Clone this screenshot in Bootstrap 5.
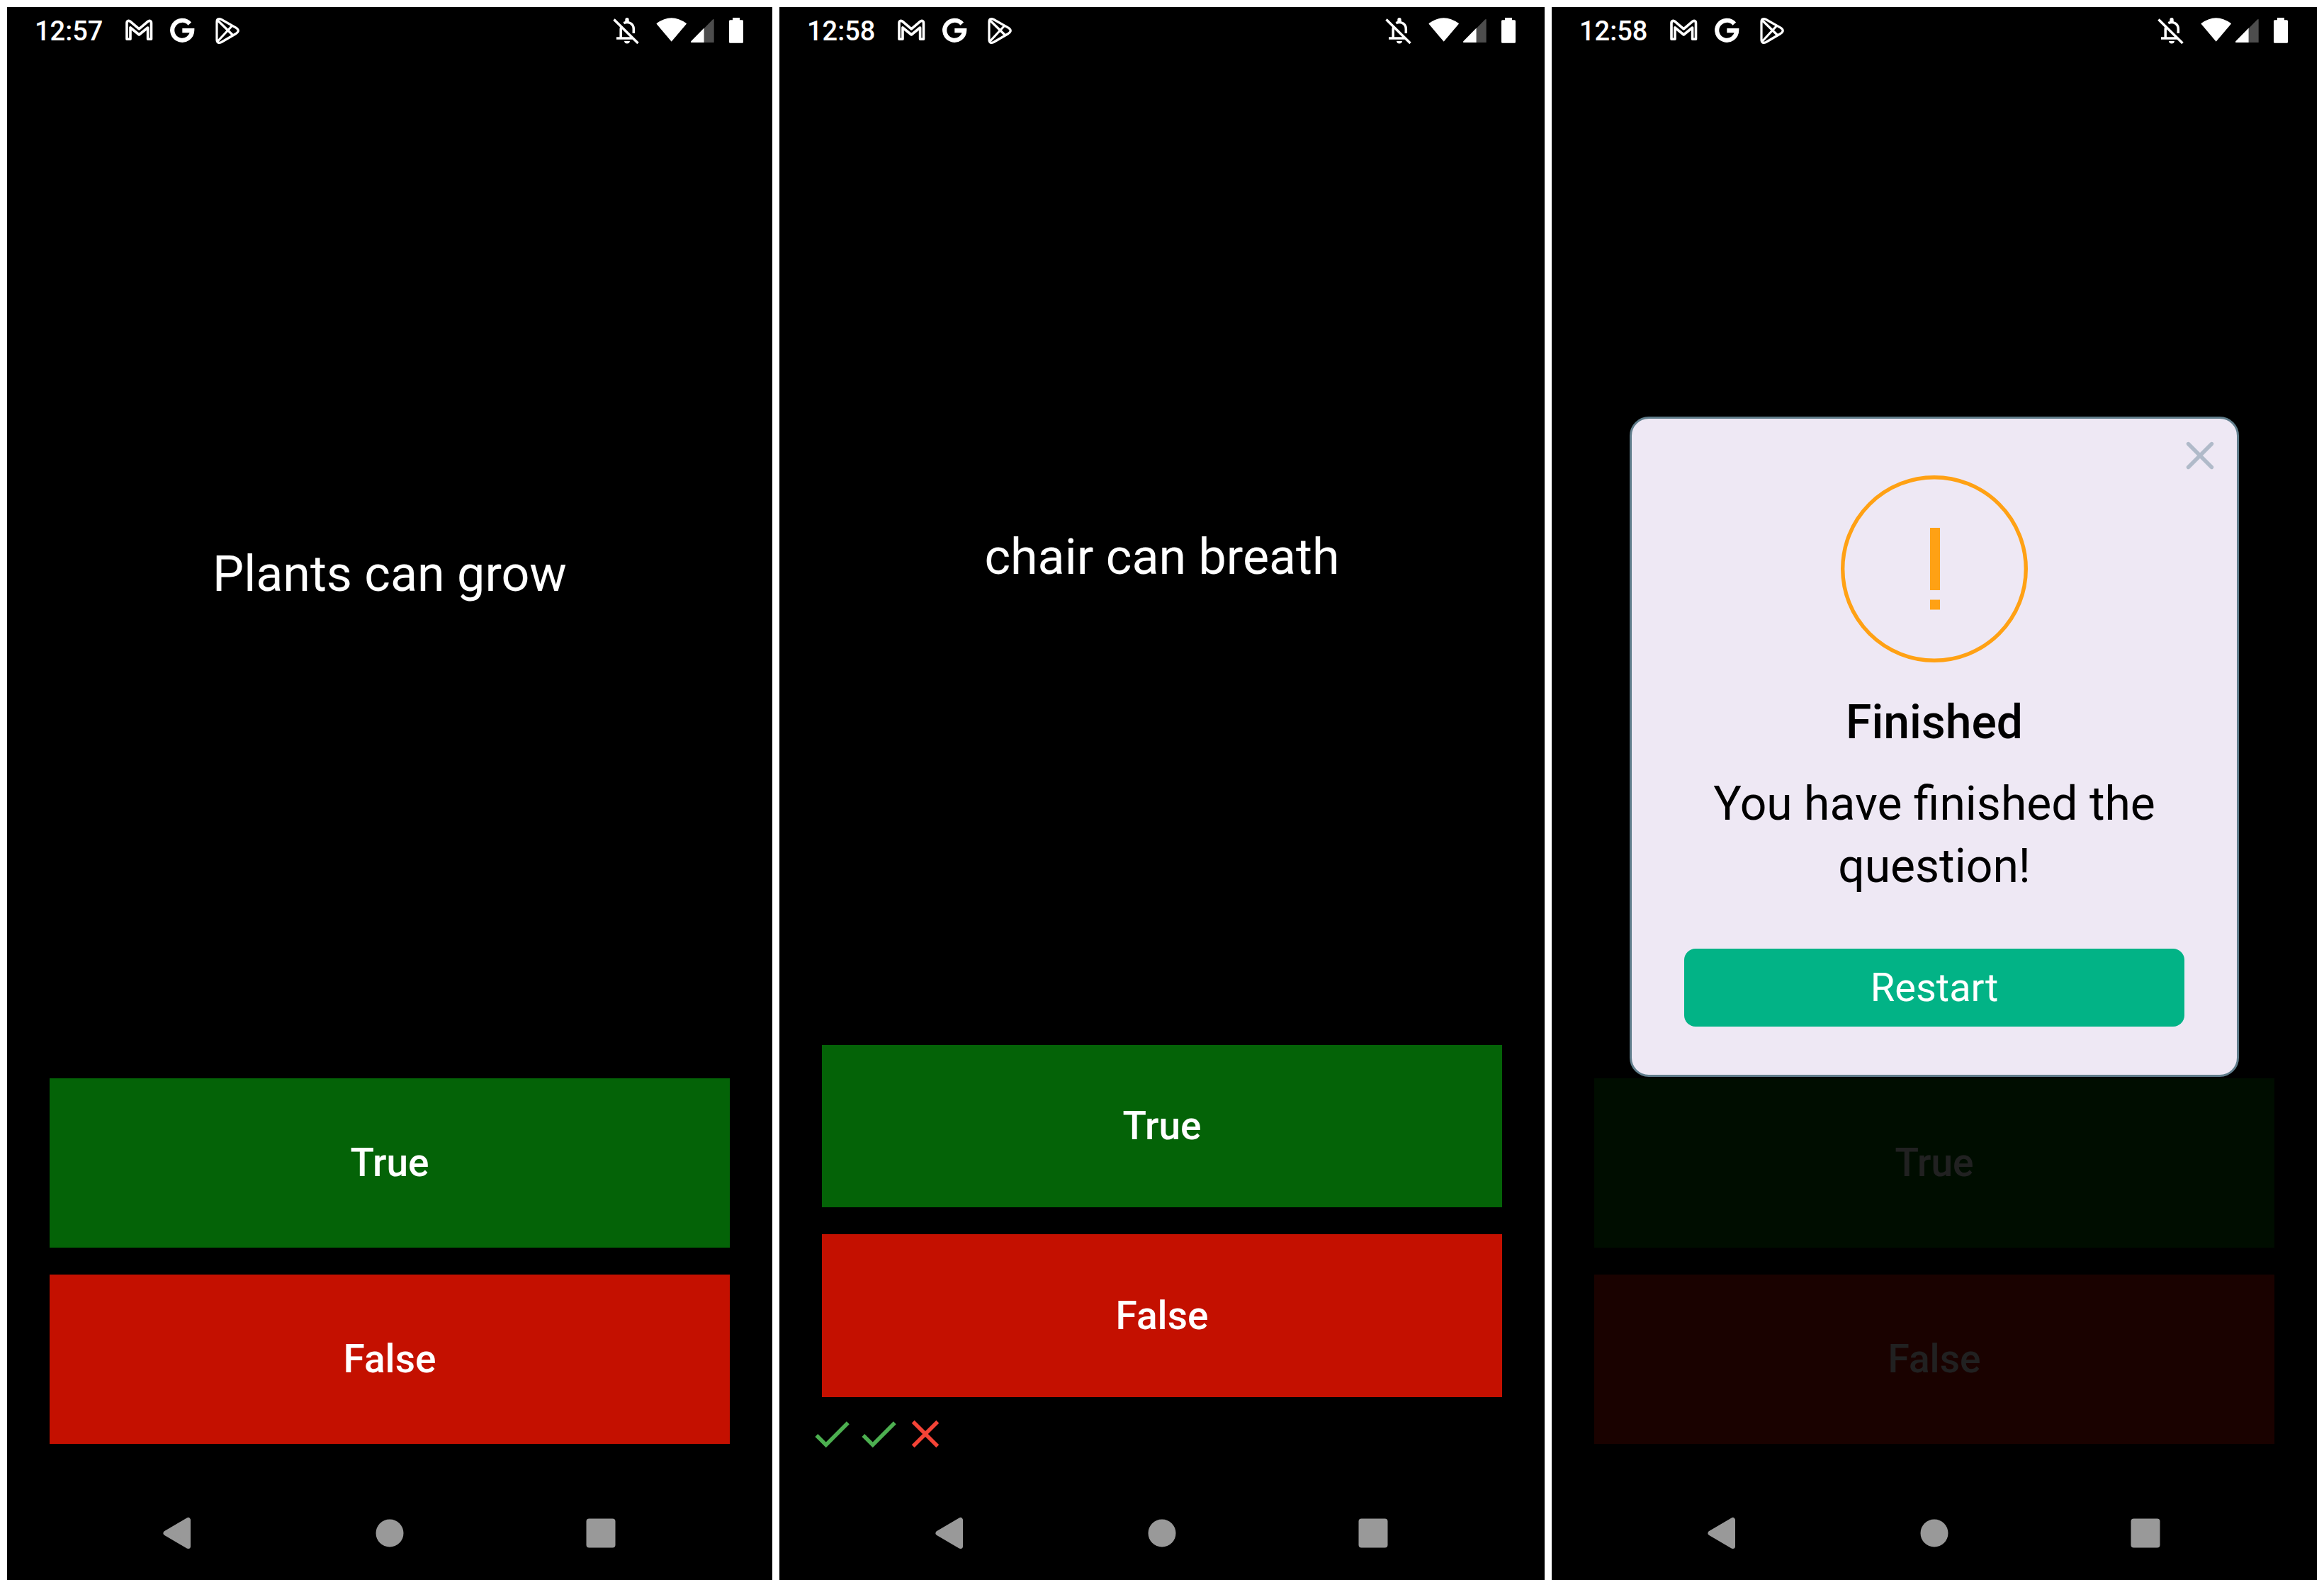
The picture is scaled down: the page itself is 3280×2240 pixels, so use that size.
<!DOCTYPE html>
<html lang="en">
<head>
<meta charset="utf-8">
<meta name="viewport" content="width=device-width, initial-scale=1">
<title>Quizzler</title>
<link href="https://cdn.jsdelivr.net/npm/bootstrap@5.3.0/dist/css/bootstrap.min.css" rel="stylesheet">
<style>
  body { font-family: Roboto, "Liberation Sans", sans-serif; background: #fff; }
  .gallery { padding: 10px; gap: 10px; }
  .phone { flex: 1 1 0; background: #000; color: #fff; }
  .statusbar { height: 66px; padding: 0 37px 0 39px; z-index: 3; }
  .clock { padding-top: 2px; font-size: 38px; line-height: 44px; font-weight: 500; margin-right: 29px; }
  .notices { gap: 18px; }
  .glyph { width: 44px; height: 44px; }
  .glyph-signal { width: 36px; margin-left: 4px; }
  .glyph-battery { width: 28px; margin-left: 15px; }
  .glyph-wifi { margin-left: 20px; }
  .quiz { padding: 41px; }
  .question { flex: 5 1 0; font-size: 70px; line-height: 80px; }
  .answer-slot { flex: 1 1 0; }
  .answer { margin: 19px; font-size: 55px; line-height: 64px; font-weight: 500; color: #fff; --bs-btn-hover-color: #fff; }
  .answer-true { background: #046307; --bs-btn-hover-bg: #05750a; }
  .answer-false { background: #c41000; --bs-btn-hover-bg: #d51200; }
  .score svg { width: 66px; height: 66px; }
  .navkeys { height: 132px; }
  .navkey { width: 298px; max-width: 33%; }
  .navkey svg { width: 60px; height: 60px; fill: #999; }
  .scrim { background: rgba(0, 0, 0, .87); z-index: 2; }
  .alert-card { width: 860px; max-width: 90%; padding: 80px 74px 68px; background: #eee8f4; color: #000; border: 3px solid #607d8b; border-radius: 27px; }
  .alert-close { top: 24px; right: 24px; width: 56px; height: 56px; }
  .alert-icon { width: 264px; height: 264px; margin-bottom: 46px; }
  .alert-title { font-size: 66px; line-height: 78px; font-weight: 500; margin-bottom: 32px; }
  .alert-text { font-size: 66px; line-height: 88px; margin-bottom: 72px; }
  .btn-restart { height: 110px; font-size: 56px; line-height: 64px; border-radius: 16px; color: #fff; background: #02b386; --bs-btn-hover-color: #fff; --bs-btn-hover-bg: #039e77; }
</style>
<script src="https://cdn.jsdelivr.net/npm/bootstrap@5.3.0/dist/js/bootstrap.bundle.min.js"></script>
</head>
<body>
<svg class="d-none" aria-hidden="true">
  <symbol id="mail" viewBox="0 0 44 44"><path d="M5 34.3V11.5C5 8 8 7.6 10 9.4L22.3 19.8 34.6 9.4C36.6 7.6 39.5 8 39.5 11.5V34.3H34.6V18L22.3 28 10 18V34.3Z" fill="none" stroke="#fff" stroke-width="3.6" stroke-linejoin="round"/></symbol>
  <symbol id="google" viewBox="0 0 44 44"><path d="M31.8 12.6A14 14 0 1 0 35.2 22.2H21.3" fill="none" stroke="#fff" stroke-width="6.2"/></symbol>
  <symbol id="play" viewBox="0 0 44 44"><path d="M8 10C8 6 10.5 4.5 14.5 6.5L35 18.2Q41.5 22.3 35 26.5L14.5 38.5C10.5 40.5 8 39 8 35ZM9 7.5 30.5 28.5M9 37.5 29.5 15.5" fill="none" stroke="#fff" stroke-width="3.2" stroke-linejoin="round"/></symbol>
  <symbol id="belloff" viewBox="0 0 44 44"><path d="M4.5 6.5 38.5 40M8 33H32M14.2 33V20Q14.2 17.5 15.5 16M18.3 11.7C25 8.5 32.3 12.5 32.3 20V26" fill="none" stroke="#fff" stroke-width="3.5"/><path d="M20.3 10V7Q20.3 4 23 4T25.7 7V10ZM19 37H27Q26.5 40.5 23 40.5T19 37Z" fill="#fff"/></symbol>
  <symbol id="wifi" viewBox="0 0 44 44"><path d="M21.7 36.6 1.4 12.5Q21.7-2.5 42 12.5Z" fill="#fff" stroke="#fff" stroke-width="1.6" stroke-linejoin="round"/></symbol>
  <symbol id="signal" viewBox="0 0 36 44"><path d="M19.7 20V39H33.7V7Q33.7 5.2 32 6.5L19.7 19Z" fill="#4d4d4d"/><path d="M19.7 18.5V39H2Q.2 39 1.3 37.3Z" fill="#fff"/></symbol>
  <symbol id="battery" viewBox="0 0 28 44"><path d="M9 4H19V7.3H22.5Q24 7.3 24 8.8V38.3Q24 39.8 22.5 39.8H5.5Q4 39.8 4 38.3V8.8Q4 7.3 5.5 7.3H9Z" fill="#fff"/></symbol>
  <symbol id="back" viewBox="0 0 60 60"><path d="M12 30 43.5 11.5V48.5Z" stroke="#999" stroke-width="7" stroke-linejoin="round"/></symbol>
  <symbol id="home" viewBox="0 0 60 60"><circle cx="30" cy="30" r="19.5"/></symbol>
  <symbol id="recent" viewBox="0 0 60 60"><rect x="9.5" y="9.5" width="41" height="41" rx="4"/></symbol>
  <symbol id="check" viewBox="0 0 24 24"><path fill="#4caf50" d="M9 16.17 4.83 12l-1.42 1.41L9 19 21 7l-1.41-1.41z"/></symbol>
  <symbol id="cross" viewBox="0 0 24 24"><path fill="#f44336" d="M19 6.41 17.59 5 12 10.59 6.41 5 5 6.41 10.59 12 5 17.59 6.41 19 12 13.41 17.59 19 19 17.59 13.41 12z"/></symbol>
</svg>

<main class="gallery d-flex vh-100">

  <section class="phone d-flex flex-column">
    <div class="d-flex flex-column flex-grow-1">
      <header class="statusbar d-flex align-items-center justify-content-between">
        <div class="d-flex align-items-center">
          <span class="clock">12:57</span>
          <div class="notices d-flex"><svg class="glyph"><use href="#mail"/></svg><svg class="glyph"><use href="#google"/></svg><svg class="glyph"><use href="#play"/></svg></div>
        </div>
        <div class="d-flex"><svg class="glyph"><use href="#belloff"/></svg><svg class="glyph glyph-wifi"><use href="#wifi"/></svg><svg class="glyph glyph-signal"><use href="#signal"/></svg><svg class="glyph glyph-battery"><use href="#battery"/></svg></div>
      </header>
      <div class="quiz d-flex flex-column flex-grow-1">
        <div class="question d-flex align-items-center justify-content-center text-center">Plants can grow</div>
        <div class="answer-slot d-flex"><button type="button" class="btn answer answer-true flex-grow-1 border-0 rounded-0">True</button></div>
        <div class="answer-slot d-flex"><button type="button" class="btn answer answer-false flex-grow-1 border-0 rounded-0">False</button></div>
      </div>
    </div>
    <nav class="navkeys d-flex align-items-center justify-content-center">
      <button type="button" class="btn navkey border-0 p-0" aria-label="Back"><svg><use href="#back"/></svg></button>
      <button type="button" class="btn navkey border-0 p-0" aria-label="Home"><svg><use href="#home"/></svg></button>
      <button type="button" class="btn navkey border-0 p-0" aria-label="Recent apps"><svg><use href="#recent"/></svg></button>
    </nav>
  </section>

  <section class="phone d-flex flex-column">
    <div class="d-flex flex-column flex-grow-1">
      <header class="statusbar d-flex align-items-center justify-content-between">
        <div class="d-flex align-items-center">
          <span class="clock">12:58</span>
          <div class="notices d-flex"><svg class="glyph"><use href="#mail"/></svg><svg class="glyph"><use href="#google"/></svg><svg class="glyph"><use href="#play"/></svg></div>
        </div>
        <div class="d-flex"><svg class="glyph"><use href="#belloff"/></svg><svg class="glyph glyph-wifi"><use href="#wifi"/></svg><svg class="glyph glyph-signal"><use href="#signal"/></svg><svg class="glyph glyph-battery"><use href="#battery"/></svg></div>
      </header>
      <div class="quiz d-flex flex-column flex-grow-1">
        <div class="question d-flex align-items-center justify-content-center text-center">chair can breath</div>
        <div class="answer-slot d-flex"><button type="button" class="btn answer answer-true flex-grow-1 border-0 rounded-0">True</button></div>
        <div class="answer-slot d-flex"><button type="button" class="btn answer answer-false flex-grow-1 border-0 rounded-0">False</button></div>
        <div class="score d-flex"><svg><use href="#check"/></svg><svg><use href="#check"/></svg><svg><use href="#cross"/></svg></div>
      </div>
    </div>
    <nav class="navkeys d-flex align-items-center justify-content-center">
      <button type="button" class="btn navkey border-0 p-0" aria-label="Back"><svg><use href="#back"/></svg></button>
      <button type="button" class="btn navkey border-0 p-0" aria-label="Home"><svg><use href="#home"/></svg></button>
      <button type="button" class="btn navkey border-0 p-0" aria-label="Recent apps"><svg><use href="#recent"/></svg></button>
    </nav>
  </section>

  <section class="phone d-flex flex-column">
    <div class="position-relative d-flex flex-column flex-grow-1">
      <header class="statusbar position-relative d-flex align-items-center justify-content-between">
        <div class="d-flex align-items-center">
          <span class="clock">12:58</span>
          <div class="notices d-flex"><svg class="glyph"><use href="#mail"/></svg><svg class="glyph"><use href="#google"/></svg><svg class="glyph"><use href="#play"/></svg></div>
        </div>
        <div class="d-flex"><svg class="glyph"><use href="#belloff"/></svg><svg class="glyph glyph-wifi"><use href="#wifi"/></svg><svg class="glyph glyph-signal"><use href="#signal"/></svg><svg class="glyph glyph-battery"><use href="#battery"/></svg></div>
      </header>
      <div class="quiz d-flex flex-column flex-grow-1">
        <div class="question"></div>
        <div class="answer-slot d-flex"><button type="button" class="btn answer answer-true flex-grow-1 border-0 rounded-0">True</button></div>
        <div class="answer-slot d-flex"><button type="button" class="btn answer answer-false flex-grow-1 border-0 rounded-0">False</button></div>
      </div>
      <div class="scrim position-absolute top-0 start-0 w-100 h-100 d-flex align-items-center justify-content-center">
        <div class="alert-card position-relative d-flex flex-column align-items-center text-center" role="dialog" aria-labelledby="done-title">
          <button type="button" class="alert-close btn border-0 p-0 position-absolute d-flex" aria-label="Close"><svg viewBox="0 0 56 56" width="56" height="56"><path d="M11.5 11.5 44.5 44.5M44.5 11.5 11.5 44.5" stroke="#b0bac9" stroke-width="5.4" stroke-linecap="round"/></svg></button>
          <svg class="alert-icon" viewBox="0 0 264 264" aria-hidden="true"><circle cx="132" cy="132" r="129.3" fill="none" stroke="#ffa114" stroke-width="5.4"/><path d="M126 74h14v88h-14zM126 175.5h14v14h-14z" fill="#ffa114"/></svg>
          <h2 class="alert-title" id="done-title">Finished</h2>
          <p class="alert-text">You have finished the question!</p>
          <button type="button" class="btn btn-restart w-100 border-0">Restart</button>
        </div>
      </div>
    </div>
    <nav class="navkeys d-flex align-items-center justify-content-center">
      <button type="button" class="btn navkey border-0 p-0" aria-label="Back"><svg><use href="#back"/></svg></button>
      <button type="button" class="btn navkey border-0 p-0" aria-label="Home"><svg><use href="#home"/></svg></button>
      <button type="button" class="btn navkey border-0 p-0" aria-label="Recent apps"><svg><use href="#recent"/></svg></button>
    </nav>
  </section>

</main>
</body>
</html>
